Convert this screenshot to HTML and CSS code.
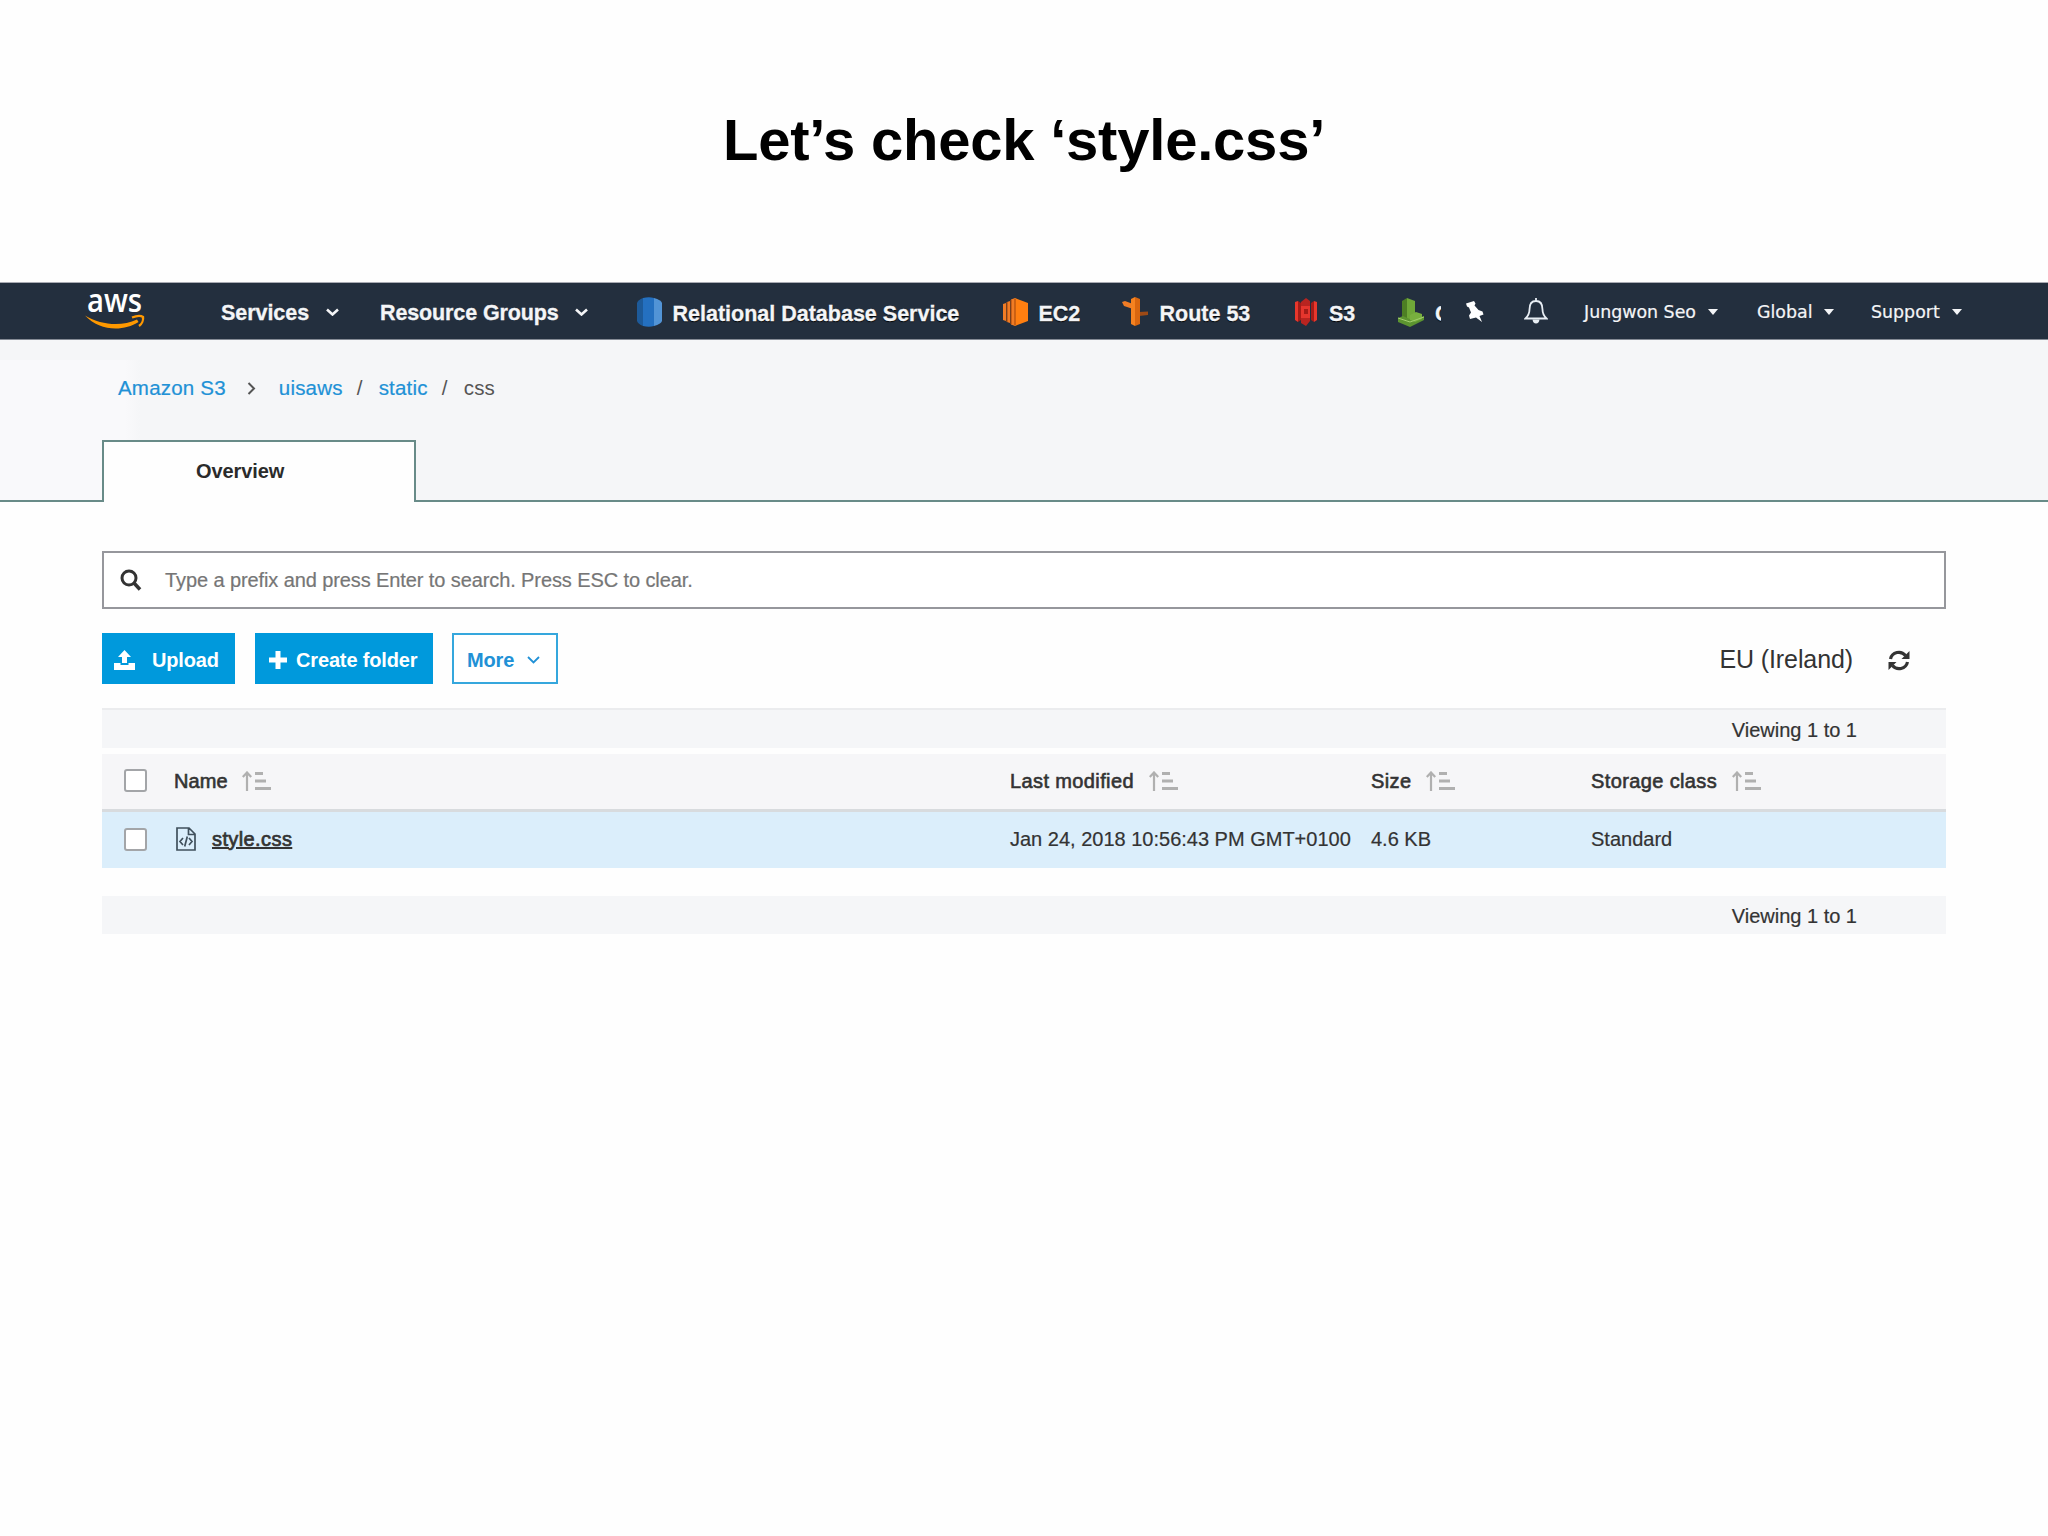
FILE: index.html
```html
<!DOCTYPE html>
<html lang="en">
<head>
<meta charset="utf-8">
<title>Let’s check ‘style.css’</title>
<link rel="stylesheet" href="styles.css">
</head>
<body>
<svg class="defs" width="0" height="0">
  <symbol id="chev" viewBox="0 0 13 8"><path d="M1 1.500 6.500 6.500 12 1.500" fill="none" stroke="currentColor" stroke-width="2.600"/></symbol>
  <symbol id="caret" viewBox="0 0 10 6"><path d="M0 0H10L5 6Z" fill="currentColor"/></symbol>
  <symbol id="sort" viewBox="0 0 29 20"><path d="M5 20V1.500M.8 6 5 1.500 9.200 6" fill="none" stroke="currentColor" stroke-width="2.200"/><path d="M13 2.500h8M13 10h11M13 17.500h16" fill="none" stroke="currentColor" stroke-width="3"/></symbol>
</svg>
<h1 class="title">Let’s check ‘style.css’</h1>
<header class="nav">
  <svg class="logo" viewBox="0 0 60 38" width="60" height="38"><text x="2" y="20" textLength="55" lengthAdjust="spacingAndGlyphs">aws</text><path d="M0 23.500C16 33 36 35 52 27.500L53.500 30C38 40 14 39 0 23.500Z" fill="#f90"/><path d="M47 25.500C52 23.500 56 23.500 58 25C58.500 28 57 32 54 34" fill="none" stroke="#f90" stroke-width="2.400"/></svg>
  <a class="menu services">Services<svg width="13" height="8"><use href="#chev"/></svg></a>
  <a class="menu groups">Resource Groups<svg width="13" height="8"><use href="#chev"/></svg></a>
  <a class="short"><svg width="25" height="30" viewBox="0 0 25 30"><path d="M0 6Q1 3 6 1V29Q1 27 0 24Z" fill="#1d5a99"/><path d="M6 1Q12-.5 17 1V29Q12 30.500 6 29Z" fill="#2470c0"/><path d="M17 1Q24 3 25 6V24Q24 27 17 29Z" fill="#5294d6"/></svg><span>Relational Database Service</span></a>
  <a class="short"><svg width="25" height="28" viewBox="0 0 25 28"><path d="M12 0 25 5V23L12 28Z" fill="#ff7f11"/><path d="M12 0 8 1.500V26.500L12 28ZM7 3 4 4V24L7 25ZM3 5 0 6V22L3 23Z" fill="#f07c25"/><path d="M8 2V26M4 4V24M12 1V27" stroke="#b04e0e" stroke-width="1.200"/></svg><span>EC2</span></a>
  <a class="short"><svg width="27" height="30" viewBox="0 0 27 30"><path d="M0 5 3 4 11 7V12L2 9Z" fill="#f07c25"/><path d="M17 15 26 14.500V18L17 19Z" fill="#9d4a16"/><path d="M9 2 13 0V29L9 27Z" fill="#f58220"/><path d="M13 0 18 2V27L13 29Z" fill="#d9660f"/></svg><span>Route 53</span></a>
  <a class="short"><svg width="24" height="28" viewBox="0 0 24 28"><path d="M1 4 4 3V24L1 22ZM20 3 23 4V22L20 24Z" fill="#e8372c"/><path d="M4 3 7 5V22L4 24ZM17 5 20 3V24L17 22Z" fill="#a51c18"/><path d="M7 4 12 0 16 3V10H7ZM7 18H16V23L12 28 7 25Z" fill="#b82420"/><path d="M7 8H16V20H7Z" fill="#e5352d"/><path d="M10 11H14V16H10Z" fill="#a51c18"/></svg><span>S3</span></a>
  <a class="short clip"><svg width="26" height="29" viewBox="0 0 26 29"><path d="M4 3 9 0V22L4 20Z" fill="#4d7f24"/><path d="M9 0 17 3V21L9 24Z" fill="#6fa838"/><path d="M0 20 5 18 14 22 26 18V22L12 29 0 24Z" fill="#5c9430"/><path d="M12 17 18 14 24 16V21L17 24 12 22Z" fill="#78b03e"/><path d="M0 20 12 24 26 19" fill="none" stroke="#a3d06f"/></svg><span>C</span></a>
  <svg class="pin" width="18" height="21" viewBox="0 0 18 21"><path d="M0 2.500 8 0 9.500 2.500 8.500 4.500 12.500 9 16.500 10.500 17.500 13.500 13.500 15 16 21 10 16.500 4 18 3 14.500 5 11.500 3 6.500 1 5.500Z" fill="#fff"/></svg>
  <svg class="bell" width="24" height="26" viewBox="0 0 24 26"><path d="M12 3C6.500 3 5.500 7.500 5.500 11.500C5.500 16 4 18 1.500 20.500H22.500C20 18 18.500 16 18.500 11.500C18.500 7.500 17.500 3 12 3ZM12 3V0" fill="none" stroke="#e8eef4" stroke-width="1.800"/><path d="M8.500 21.500H15.500Q15 25.500 12 25.500Q9 25.500 8.500 21.500" fill="#e8eef4"/></svg>
  <a class="user">Jungwon Seo<svg width="10" height="6"><use href="#caret"/></svg></a>
  <a class="user">Global<svg width="10" height="6"><use href="#caret"/></svg></a>
  <a class="user">Support<svg width="10" height="6"><use href="#caret"/></svg></a>
</header>
<section class="head">
  <nav class="crumbs"><a>Amazon S3</a><svg width="9" height="13" viewBox="0 0 9 13"><path d="M1.500 1 7 6.500 1.500 12" fill="none" stroke="#555" stroke-width="2"/></svg><a>uisaws</a><span class="sep">/</span><a>static</a><span class="sep">/</span><span>css</span></nav>
  <div class="tabs"><div class="lead"></div><div class="tab">Overview</div><div class="rest"></div></div>
</section>
<main class="main">
  <div class="search"><svg width="22" height="22" viewBox="0 0 22 22"><circle cx="9" cy="9" r="7" fill="none" stroke="#333" stroke-width="3"/><path d="M14 14 20 20.500" stroke="#333" stroke-width="3.500"/></svg><span>Type a prefix and press Enter to search. Press ESC to clear.</span></div>
  <div class="bar">
    <button class="btn up"><svg width="21" height="20" viewBox="0 0 21 20"><path d="M10.500 0 17 7H13V13H8V7H4ZM0 13H6.500V15H14.500V13H21V20H0Z" fill="#fff"/></svg><span>Upload</span></button>
    <button class="btn mk"><svg width="18" height="18" viewBox="0 0 18 18"><path d="M9 0V18M0 9H18" stroke="#fff" stroke-width="5"/></svg><span>Create folder</span></button>
    <button class="btn more"><span>More</span><svg width="13" height="8" viewBox="0 0 13 8"><path d="M1 1 6.500 6.500 12 1" fill="none" stroke="currentColor" stroke-width="1.800"/></svg></button>
    <span class="region">EU (Ireland)</span>
    <svg class="refresh" width="22" height="21" viewBox="0 0 22 21"><path d="M2.500 9C4 2 13 0 17.500 5.500M19.500 12C18 19 9 21 4.500 15.500" fill="none" stroke="#333" stroke-width="3.200"/><path d="M21.500 1V9H13.500ZM.5 20V12H8.500Z" fill="#333"/></svg>
  </div>
  <div class="count top">Viewing 1 to 1</div>
  <div class="row th"><i class="box"></i><span class="cell first"><b>Name</b><svg width="29" height="20"><use href="#sort"/></svg></span><span class="cell"><b>Last modified</b><svg width="29" height="20"><use href="#sort"/></svg></span><span class="cell"><b>Size</b><svg width="29" height="20"><use href="#sort"/></svg></span><span class="cell"><b>Storage class</b><svg width="29" height="20"><use href="#sort"/></svg></span></div>
  <div class="row td"><i class="box"></i><span class="cell file"><svg width="20" height="24" viewBox="0 0 20 24"><path d="M1 1H13L19 7V23H1ZM12.500 1V7.500H19M7 11 4 14.500 7 18M13 11 16 14.500 13 18M11.300 9.500 8.700 19.500" fill="none" stroke="#40505c" stroke-width="1.700"/></svg><b>style.css</b></span><span class="cell">Jan 24, 2018 10:56:43 PM GMT+0100</span><span class="cell">4.6 KB</span><span class="cell">Standard</span></div>
  <div class="count foot">Viewing 1 to 1</div>
</main>
</body>
</html>
```
FILE: styles.css
```css
* { box-sizing: border-box; }
body { margin: 0; width: 2048px; height: 1536px; overflow: hidden; background: #fefefe; color: #333; font-family: "Liberation Sans", Arial, sans-serif; font-size: 20px; white-space: nowrap; }
.defs { display: block; }
svg { display: block; flex: none; }
.title { margin: 0; height: 282px; padding-top: 107px; text-align: center; font-size: 58px; line-height: 66px; letter-spacing: -.22px; color: #000; }
.nav { height: 58px; border-top: 1px solid #a9abb3; border-bottom: 1px solid #858b95; background: #232f3e; color: #f4f5f7; display: grid; grid-template-columns: 136px 159px 256.500px 366px 119px 172.500px 104px 43px 83px 60px 173px 114px 140px; padding-left: 85px; align-items: center; }
.logo { overflow: visible; }
.logo text { font: 600 33px "Open Sans", "Noto Sans", sans-serif; fill: #fff; }
.menu, .short { display: flex; align-items: center; font-weight: bold; font-size: 21.500px; line-height: 30px; -webkit-text-stroke: .3px; }
.menu { gap: 17px; padding-top: 3px; letter-spacing: -.05px; }
.menu svg { margin-top: -2px; }
.groups { gap: 16px; letter-spacing: -.12px; }
.short { gap: 11px; text-shadow: 0 1px 1px #000; padding-top: 2px; }
.short span { padding-top: 4px; }
.clip { overflow: hidden; }
.pin { margin-left: 25px; }
.user { display: flex; align-items: center; gap: 12px; font-family: "DejaVu Sans", Verdana, sans-serif; font-size: 17.400px; line-height: 26px; padding-top: 1px; -webkit-text-stroke: .2px; }
.head { height: 162px; background: #f5f6f8 linear-gradient(90deg, #f9f9fb 125px, #f5f6f8 140px) no-repeat 0 100% / 140px 142px; display: flex; flex-direction: column; justify-content: space-between; }
.crumbs { display: flex; align-items: center; padding: 34px 0 0 118px; font-size: 20.500px; line-height: 28px; letter-spacing: .2px; color: #555; }
.crumbs a { color: #2191d6; -webkit-text-stroke: .2px; }
.crumbs svg { margin: 1px 23px 0 21px; }
.sep { width: 8px; margin: 0 14px; }
.tabs { display: flex; height: 62px; }
.lead, .rest { border-bottom: 2px solid #688b88; }
.lead { width: 102px; }
.rest { flex: 1; }
.tab { width: 314px; border: 2px solid #688b88; border-bottom: 0; background: #fefefe; padding: 15px 0 0 92px; line-height: 28px; font-weight: bold; letter-spacing: -.1px; color: #2b2b2b; }
.main { padding: 49px 102px 0; }
.search { height: 58px; border: 2px solid #96979c; background: #fff; display: flex; align-items: center; padding-left: 16px; gap: 23px; font-size: 20px; letter-spacing: -.1px; color: #767676; -webkit-text-stroke: .2px; }
.bar { display: flex; align-items: center; height: 51px; margin: 24px 0; }
.btn { font: bold 20px/28px "Liberation Sans", Arial, sans-serif; letter-spacing: -.15px; height: 51px; border: 0; padding: 2px 0 0; background: #0099dc; color: #fff; display: flex; align-items: center; }
.up { width: 133px; padding-left: 12px; gap: 17px; margin-right: 20px; }
.mk { width: 178px; padding-left: 14px; gap: 9px; margin-right: 19px; }
.more { width: 106px; padding: 2px 0 0 13px; gap: 13px; border: 2px solid #35a7dd; background: #fff; color: #2191d6; }
.region { font-size: 25px; letter-spacing: -.1px; margin-left: auto; padding-top: 2px; }
.refresh { margin: 4px 36px 0 35px; }
.count { background: #f5f6f8; display: flex; justify-content: flex-end; padding-right: 89px; -webkit-text-stroke: .2px; }
.top { height: 40px; line-height: 40px; border-top: 2px solid #ebecee; margin-bottom: 6px; }
.foot { height: 38px; line-height: 40px; margin-top: 28px; }
.row { display: grid; grid-template-columns: 22px 50px 836px 361px 220px 1fr; align-items: center; }
.row .box { grid-column: 2; }
.th { height: 58px; background: #f6f6f8; border-bottom: 3px solid #d8dbde; }
.td { height: 56px; background: #dbeefb; -webkit-text-stroke: .2px; }
.td .cell { padding-bottom: 2px; }
.box { width: 23px; height: 23px; margin-top: -2px; border: 2px solid #a3a5a8; border-radius: 3px; background: #fff; }
.cell { display: flex; align-items: center; gap: 15px; line-height: 28px; }
.th .cell { padding-bottom: 2px; }
.first { gap: 14px; }
.cell svg { color: #b0b0b0; }
.th b { font-weight: normal; -webkit-text-stroke: .6px; letter-spacing: .38px; }
.th .first b { letter-spacing: .1px; }
.td .file { padding-left: 2px; gap: 16px; }
.file b { font-weight: normal; -webkit-text-stroke: .7px; letter-spacing: .4px; text-decoration: underline; }
```
